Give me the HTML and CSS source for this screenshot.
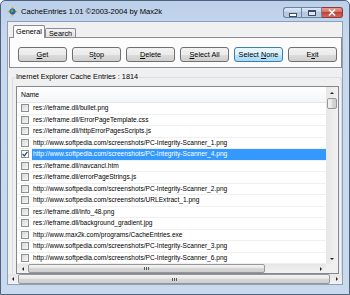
FILE: index.html
```html
<!DOCTYPE html>
<html lang="en">
<head>
    <meta charset="UTF-8">
    <title>CacheEntries</title>
    <link rel="stylesheet" href="styles.css">
</head>
<body>
    <div class="window">
        <div class="titlebar">
            <svg class="app-icon" width="11" height="11" viewBox="0 0 11 11">
                <polygon points="5.5,0 7,3.5 4,3.5" fill="#e8a818"/>
                <polygon points="11,5.5 7.5,7 7.5,4" fill="#e8a818"/>
                <polygon points="5.5,11 4,7.5 7,7.5" fill="#e8a818"/>
                <polygon points="0,5.5 3.5,4 3.5,7" fill="#e8a818"/>
                <circle cx="5.5" cy="5.5" r="3" fill="#2a5fb8"/>
                <circle cx="5" cy="5" r="1.4" fill="#4cb84a"/>
            </svg>
            <span class="title">CacheEntries 1.01 ©2003-2004 by Max2k</span>
            <div class="caption-buttons">
                <span class="cap cap-min"><i class="glyph-min"></i></span>
                <span class="cap cap-max"><i class="glyph-max"></i></span>
                <span class="cap cap-close">
                    <svg width="8" height="7" viewBox="0 0 8 7"><path d="M1 0.5 L7 6.5 M7 0.5 L1 6.5" stroke="#fff" stroke-width="1.6"/></svg>
                </span>
            </div>
        </div>

        <div class="client">
            <div class="tabs">
                <span class="tab active">General</span>
                <span class="tab">Search</span>
            </div>
            <div class="tab-page">
                <button class="btn"><u>G</u>et</button>
                <button class="btn">S<u>t</u>op</button>
                <button class="btn"><u>D</u>elete</button>
                <button class="btn"><u>S</u>elect All</button>
                <button class="btn btn-hot">Select <u>N</u>one</button>
                <button class="btn">E<u>x</u>it</button>
            </div>

            <fieldset class="group">
                <legend>Inernet Explorer Cache Entries : 1814</legend>
                <div class="listview">
                    <div class="list-main">
                        <div class="list-body">
                            <div class="list-header">Name</div>
                            <div class="row"><span class="check"></span><span class="cell">res://ieframe.dll/bullet.png</span></div>
                            <div class="row"><span class="check"></span><span class="cell">res://ieframe.dll/ErrorPageTemplate.css</span></div>
                            <div class="row"><span class="check"></span><span class="cell">res://ieframe.dll/httpErrorPagesScripts.js</span></div>
                            <div class="row"><span class="check"></span><span class="cell">http://www.softpedia.com/screenshots/PC-Integrity-Scanner_1.png</span></div>
                            <div class="row selected"><span class="check checked"><svg width="6" height="6" viewBox="0 0 6 6"><path d="M0.6 3 L2.3 4.8 L5.4 0.8" fill="none" stroke="#1d3f78" stroke-width="1.2"/></svg></span><span class="cell">http://www.softpedia.com/screenshots/PC-Integrity-Scanner_4.png</span></div>
                            <div class="row"><span class="check"></span><span class="cell">res://ieframe.dll/navcancl.htm</span></div>
                            <div class="row"><span class="check"></span><span class="cell">res://ieframe.dll/errorPageStrings.js</span></div>
                            <div class="row"><span class="check"></span><span class="cell">http://www.softpedia.com/screenshots/PC-Integrity-Scanner_2.png</span></div>
                            <div class="row"><span class="check"></span><span class="cell">http://www.softpedia.com/screenshots/URLExtract_1.png</span></div>
                            <div class="row"><span class="check"></span><span class="cell">res://ieframe.dll/info_48.png</span></div>
                            <div class="row"><span class="check"></span><span class="cell">res://ieframe.dll/background_gradient.jpg</span></div>
                            <div class="row"><span class="check"></span><span class="cell">http://www.max2k.com/programs/CacheEntries.exe</span></div>
                            <div class="row"><span class="check"></span><span class="cell">http://www.softpedia.com/screenshots/PC-Integrity-Scanner_3.png</span></div>
                            <div class="row"><span class="check"></span><span class="cell">http://www.softpedia.com/screenshots/PC-Integrity-Scanner_6.png</span></div>
                        </div>
                        <div class="vscroll">
                            <span class="sb-btn"><i class="arr-up"></i></span>
                            <span class="vthumb"></span>
                            <span class="sb-fill"></span>
                            <span class="sb-btn"><i class="arr-down"></i></span>
                        </div>
                    </div>
                    <div class="hscroll-row">
                        <div class="hscroll inner">
                            <span class="sb-btn"><i class="arr-left"></i></span>
                            <span class="hthumb inner-thumb"><i class="grip"></i></span>
                            <span class="sb-fill"></span>
                            <span class="sb-btn"><i class="arr-right"></i></span>
                        </div>
                        <span class="corner"></span>
                    </div>
                </div>
            </fieldset>

            <div class="hscroll outer">
                <span class="sb-btn"><i class="arr-left"></i></span>
                <span class="hthumb outer-thumb"><i class="grip"></i></span>
                <span class="sb-fill"></span>
                <span class="sb-btn"><i class="arr-right"></i></span>
            </div>
        </div>
    </div>
</body>
</html>
```

FILE: styles.css
```css
body {
    margin: 0;
    font-family: "Liberation Sans", Arial, sans-serif;
    font-size: 7px;
    background: #fff;
}

.window {
    width: 350px;
    height: 295px;
    box-sizing: border-box;
    border: 1px solid #4f627b;
    border-radius: 5px 5px 0 0;
    background: linear-gradient(#bcd0e9, #c8d9ee 40px, #c9daef);
    display: flex;
    flex-direction: column;
    overflow: hidden;
}

/* title bar */
.titlebar {
    height: 20px;
    display: flex;
    align-items: center;
    padding: 0 6px;
}

.app-icon {
    flex: none;
}

.title {
    margin-left: 3px;
    font-size: 7.6px;
    color: #000;
}

.caption-buttons {
    margin-left: auto;
    align-self: flex-start;
    margin-top: 6px;
    display: flex;
}

.cap {
    height: 11px;
    box-sizing: border-box;
    border: 1px solid #6c82a2;
    display: flex;
    align-items: center;
    justify-content: center;
    background: linear-gradient(#dfe8f4, #c3d3e8 50%, #b2c6df 50%, #bccde3);
}

.cap-min {
    width: 18px;
    border-radius: 3px 0 0 3px;
    border-right: none;
}

.cap-max {
    width: 21px;
}

.cap-close {
    width: 21px;
    border-left: none;
    border-color: #8a3a3a;
    border-radius: 0 3px 3px 0;
    background: linear-gradient(#e6a192, #d4665a 50%, #c2423a 50%, #cf6a5e);
}

.glyph-min {
    width: 6px;
    height: 2px;
    margin-top: 4px;
    border: 1px solid #3c4c66;
    background: #fff;
}

.glyph-max {
    width: 6px;
    height: 3px;
    border: 1px solid #3c4c66;
    border-top-width: 2px;
    background: #dfe8f4;
}

/* client area */
.client {
    margin: 0 6px;
    height: 264px;
    box-sizing: border-box;
    border: 1px solid #8aa0bd;
    background: #f0f0f0;
    display: flex;
    flex-direction: column;
    overflow: hidden;
}

.tabs {
    display: flex;
    align-items: flex-end;
    height: 16px;
    flex: none;
    padding-left: 5px;
    margin-bottom: -1px;
    position: relative;
    z-index: 1;
}

.tab {
    height: 8px;
    margin-bottom: 1px;
    padding: 0 3px;
    border: 1px solid #898c95;
    border-bottom: none;
    border-radius: 2px 2px 0 0;
    background: linear-gradient(#f4f4f4, #e1e1e1);
    font-size: 7.3px;
    line-height: 9px;
}

.tab.active {
    height: 12px;
    margin-bottom: 0;
    padding: 0 2px;
    background: #fcfcfc;
    line-height: 11px;
}

.tab-page {
    height: 31px;
    flex: none;
    box-sizing: border-box;
    margin: 0 0 0 1px;
    border: 1px solid #898c95;
    background: #fcfcfc;
    display: flex;
    gap: 5px;
    padding: 9px 0 0 8px;
}

.btn {
    width: 49px;
    height: 15px;
    box-sizing: border-box;
    padding: 0;
    border: 1px solid #707070;
    border-radius: 3px;
    background: linear-gradient(#f2f2f2, #ebebeb 50%, #dddddd 50%, #cfcfcf);
    font-family: "Liberation Sans", Arial, sans-serif;
    font-size: 7.3px;
    color: #000;
}

.btn-hot {
    border-color: #3c7fb1;
    background: linear-gradient(#eaf6fd, #d9f0fc 50%, #bee6fd 50%, #a7d9f5);
}

/* group box */
.group {
    margin: 5px 0 0 4px;
    padding: 5px 2px 0 3px;
    border: 1px solid #d5dfe5;
    border-bottom: none;
    border-radius: 3px 3px 0 0;
    min-width: 0;
    flex: none;
}

.group legend {
    padding: 0 1px;
    margin-left: -1px;
    font-size: 7.3px;
    line-height: 8px;
    color: #000;
}

.listview {
    height: 188px;
    box-sizing: border-box;
    border: 1px solid #828790;
    background: #fff;
    display: flex;
    flex-direction: column;
}

.list-main {
    flex: 1;
    display: flex;
    min-height: 0;
}

.list-body {
    flex: 1;
    overflow: hidden;
    min-width: 0;
}

.list-header {
    height: 16px;
    box-sizing: border-box;
    border-bottom: 1px solid #e3e6ea;
    background: linear-gradient(#ffffff, #f4f5f7);
    padding-left: 4px;
    line-height: 15px;
    font-size: 6.8px;
}

.row {
    height: 11.5px;
    box-sizing: border-box;
    display: flex;
    align-items: center;
    border-bottom: 1px solid #f0f0f0;
}

.check {
    flex: none;
    width: 8px;
    height: 8px;
    margin: 0 3px 0 4px;
    box-sizing: border-box;
    border: 1px solid #8e8f8f;
    background: linear-gradient(135deg, #d8d8d8, #f6f6f6);
    display: flex;
    align-items: center;
    justify-content: center;
}

.check.checked {
    background: #fff;
}

.cell {
    flex: 1;
    height: 100%;
    padding-left: 1px;
    white-space: nowrap;
    font-size: 6.6px;
    line-height: 10.5px;
    color: #000;
}

.row.selected .cell {
    background: #3399ff;
    color: #fff;
}

/* scroll bars */
.vscroll {
    width: 12px;
    flex: none;
    display: flex;
    flex-direction: column;
    background: linear-gradient(90deg, #e6e6e6, #f2f2f2);
}

.sb-btn {
    flex: none;
    width: 11px;
    height: 11px;
    display: flex;
    align-items: center;
    justify-content: center;
}

.vscroll .sb-btn {
    width: 12px;
}

.sb-fill {
    flex: 1;
}

.vthumb {
    height: 11px;
    margin: 0 1px;
    box-sizing: border-box;
    border: 1px solid #979797;
    border-radius: 2px;
    background: linear-gradient(90deg, #f4f4f4, #e6e6e6 50%, #d6d6d6 50%, #cfcfcf);
}

.arr-up, .arr-down, .arr-left, .arr-right {
    width: 0;
    height: 0;
    border: 2px solid transparent;
}

.arr-up {
    border-bottom: 2px solid #222;
    border-top: none;
}

.arr-down {
    border-top: 2px solid #222;
    border-bottom: none;
}

.arr-left {
    border-right: 2px solid #222;
    border-left: none;
}

.arr-right {
    border-left: 2px solid #222;
    border-right: none;
}

.hscroll-row {
    height: 9px;
    flex: none;
    display: flex;
}

.hscroll {
    display: flex;
    background: linear-gradient(#e6e6e6, #f2f2f2);
}

.hscroll.inner {
    flex: 1;
}

.hscroll.inner .sb-btn {
    height: 9px;
}

.corner {
    width: 12px;
    background: #f0f0f0;
}

.hthumb {
    box-sizing: border-box;
    border: 1px solid #979797;
    border-radius: 2px;
    background: linear-gradient(#f4f4f4, #e6e6e6 50%, #d6d6d6 50%, #cfcfcf);
    display: flex;
    align-items: center;
    justify-content: center;
}

.inner-thumb {
    width: 237px;
}

.hscroll.outer {
    height: 10px;
    flex: none;
}

.hscroll.outer .sb-btn {
    width: 10px;
    height: 10px;
}

.outer-thumb {
    width: 312px;
}

.grip {
    width: 5px;
    height: 3px;
    background: repeating-linear-gradient(90deg, #5a5a5a 0 1px, transparent 1px 2px);
}
```
